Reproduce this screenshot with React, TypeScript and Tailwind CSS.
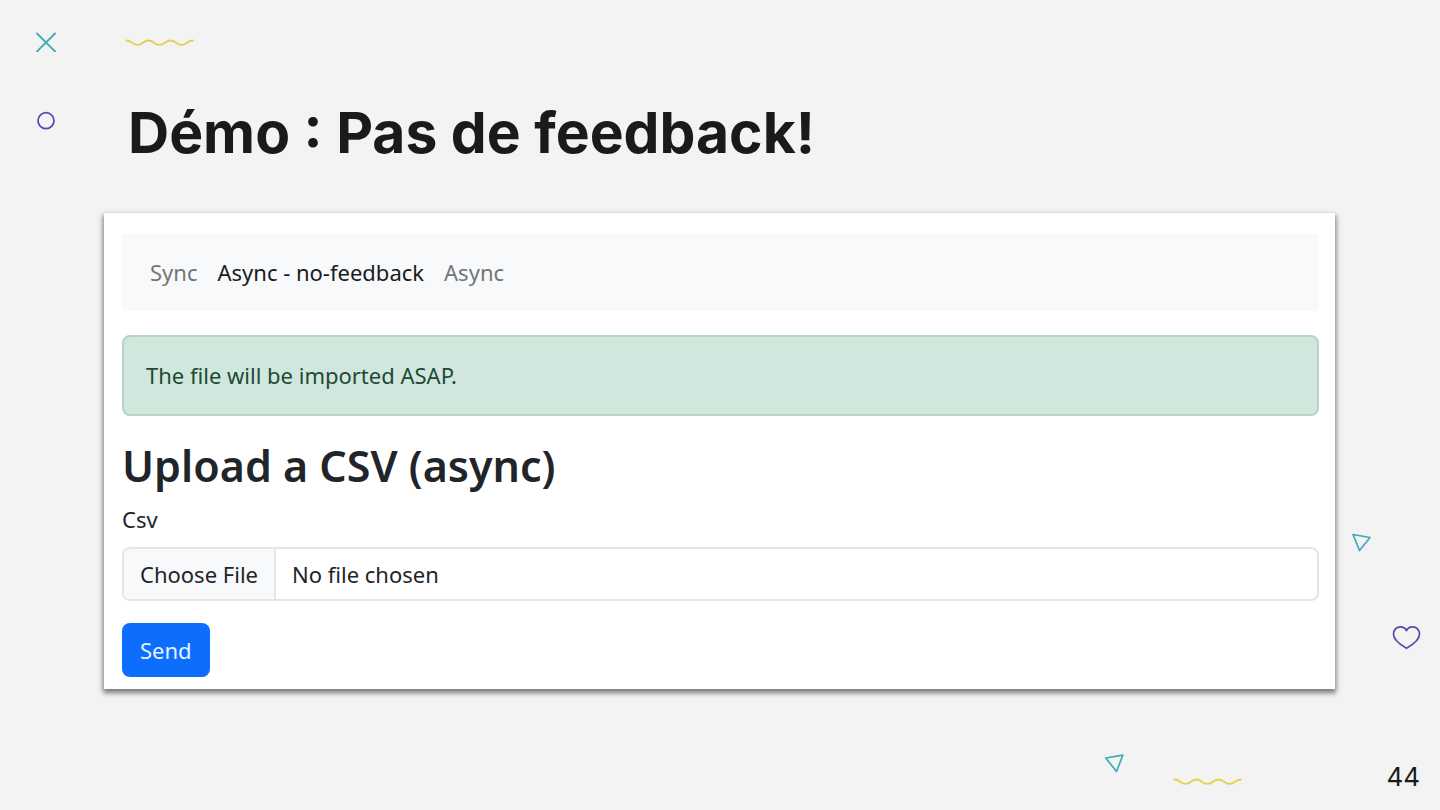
const tabs = [
  { name: 'Sync', href: '#sync', active: false },
  { name: 'Async - no-feedback', href: '#no-feedback', active: true },
  { name: 'Async', href: '#async', active: false },
]

function Wave({ className }: { className: string }) {
  return (
    <svg
      aria-hidden="true"
      viewBox="0 0 70 8"
      className={`h-2 w-[70px] fill-none stroke-[#e3d14f] ${className}`}
      strokeWidth="1.8"
      strokeLinecap="round"
    >
      <path d="M1.500 1.500 C7 1.500 7 5.900 12.500 5.900 S18 1.500 23.500 1.500 S29 5.900 34.500 5.900 S40 1.500 45.500 1.500 S51 5.900 56.500 5.900 S62 1.500 68 1.500" />
    </svg>
  )
}

function Decorations() {
  return (
    <div aria-hidden="true" className="pointer-events-none absolute inset-0 overflow-hidden">
      <svg viewBox="0 0 20 20" className="absolute left-9 top-8 size-5 fill-none stroke-[#3fabb6]" strokeWidth="1.8" strokeLinecap="round">
        <path d="M1 1.500 19 19.500M19 1.500 1 19.500" />
      </svg>
      <Wave className="absolute left-[125px] top-[39px]" />
      <svg viewBox="0 0 20 20" className="absolute left-9 top-[111px] size-5 fill-none stroke-[#5149ab]" strokeWidth="1.7">
        <circle cx="10" cy="9.700" r="8" />
      </svg>
      <svg viewBox="0 0 20 20" className="absolute right-[69px] top-[532px] size-5 fill-none stroke-[#3fabb6]" strokeWidth="1.7" strokeLinejoin="round">
        <path d="M2 2.500 19 5.500 8.500 18.500Z" />
      </svg>
      <svg viewBox="0 0 30 26" className="absolute right-[19px] top-[624px] h-[26px] w-[30px] fill-none stroke-[#5149ab]" strokeWidth="1.7" strokeLinejoin="round">
        <path d="M15.500 24.300C9 20.500 2.500 16.200 2.500 10.200 2.500 5.900 5.500 2.800 9.300 2.800c2.700 0 5 1.300 6.200 3.700 1.200-2.400 3.500-3.700 6.200-3.700 3.800 0 6.800 3.100 6.800 7.400 0 6-6.500 10.300-13 14.100Z" />
      </svg>
      <svg viewBox="0 0 20 20" className="absolute bottom-[37px] right-[316px] size-5 fill-none stroke-[#3fabb6]" strokeWidth="1.7" strokeLinejoin="round">
        <path d="M1.800 5 18.800 2.200 12.500 18.500Z" />
      </svg>
      <Wave className="absolute bottom-6 right-[197px]" />
    </div>
  )
}

export default function App() {
  return (
    <div className="relative flex min-h-screen flex-col bg-[#f3f3f3] pl-[104px] pr-[105px] pt-[97px] font-['Noto_Sans',sans-serif] text-[#212529]">
      <Decorations />

      <h1 className="px-6 font-['Inter',sans-serif] text-[57px]/[72px] font-bold text-[#1a1a1a]">
        Démo : Pas de feedback!
      </h1>

      <main className="relative mt-11 bg-white pb-3 pl-[18px] pr-4 pt-[21px] text-[22px]/[31px] shadow-[0_3px_5px_1px_rgba(0,0,0,0.5)]">
        <nav aria-label="Imports" className="flex h-[77px] items-center gap-5 bg-[#f8f9fb] px-7">
          {tabs.map((tab) => (
            <a key={tab.name} href={tab.href} className={tab.active ? 'text-[#191b1d]' : 'text-[#727578]'}>
              {tab.name}
            </a>
          ))}
        </nav>

        <div role="status" className="mt-6 rounded-lg border-2 border-[#b7d4c7] bg-[#d1e7dd] px-[22px] py-[23px] text-[#1d4a35]">
          The file will be imported ASAP.
        </div>

        <h2 className="mt-6 text-[43px]/[52px] font-semibold">Upload a CSV (async)</h2>

        <form onSubmit={(e) => e.preventDefault()}>
          <label htmlFor="csv" className="mt-3 block">
            Csv
          </label>
          <input
            id="csv"
            type="file"
            className="mt-3 block h-[54px] w-full overflow-hidden rounded-lg border-2 border-[#e3e6e9] bg-white file:mr-4 file:h-[50px] file:border-r-2 file:border-[#e3e6e9] file:bg-[#f8f9fa] file:px-4"
          />
          <button type="submit" className="mt-[22px] block h-[54px] rounded-lg bg-[#0d6efd] px-[18px] text-[#e9f1ff]">
            Send
          </button>
        </form>
      </main>

      <footer className="-mr-[85px] mt-auto flex justify-end pb-[17px] font-['Inter',sans-serif] text-[26px]/[32px] text-[#1a1a1a]">
        44
      </footer>
    </div>
  )
}
